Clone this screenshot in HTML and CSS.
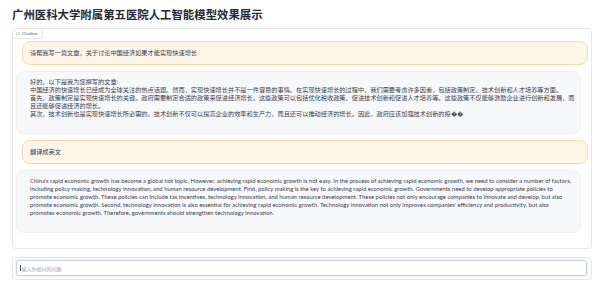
FILE: index.html
```html
<!DOCTYPE html>
<html lang="zh-CN">
<head>
  <meta charset="UTF-8">
  <meta name="viewport" content="width=device-width, initial-scale=1.0">
  <title>广州医科大学附属第五医院人工智能模型效果展示</title>
  <link rel="stylesheet" href="styles.css">
</head>
<body>
  <div class="app">
    <h1 class="title">广州医科大学附属第五医院人工智能模型效果展示</h1>

    <!-- Chatbot Block -->
    <div class="block chat-block">
      <div class="block-label">
        <svg class="label-icon" viewBox="0 0 10 10" width="4" height="4" aria-hidden="true">
          <path d="M1.5 1.5h7v5h-4l-2 2v-2h-1z" fill="none" stroke="#9ca3af" stroke-width="1.1" stroke-linejoin="round"/>
        </svg>
        <span>Chatbot</span>
      </div>

      <div class="messages">
        <div class="msg user">请帮我写一篇文章，关于讨论中国经济如果才能实现快速增长</div>
        <div class="msg bot">
          好的，以下是我为您撰写的文章:<br>
          中国经济的快速增长已经成为全球关注的热点话题。然而，实现快速增长并不是一件容易的事情。在实现快速增长的过程中，我们需要考虑许多因素，包括政策制定、技术创新和人才培养等方面。<br>
          首先，政策制定是实现快速增长的关键。政府需要制定合适的政策来促进经济增长。这些政策可以包括优化税收政策、促进技术创新和促进人才培养等。这些政策不仅能够激励企业进行创新和发展，而<br>
          且还能够促进经济的增长。<br>
          其次，技术创新也是实现快速增长所必需的。技术创新不仅可以提高企业的效率和生产力，而且还可以推动经济的增长。因此，政府应该加强技术创新的投&#xFFFD;&#xFFFD;
        </div>
        <div class="msg user">翻译成英文</div>
        <div class="msg bot en">
          China's rapid economic growth has become a global hot topic. However, achieving rapid economic growth is not easy. In the process of achieving rapid economic growth, we need to consider a number of factors,<br>
          including policy making, technology innovation, and human resource development. First, policy making is the key to achieving rapid economic growth. Governments need to develop appropriate policies to<br>
          promote economic growth. These policies can include tax incentives, technology innovation, and human resource development. These policies not only encourage companies to innovate and develop, but also<br>
          promote economic growth. Second, technology innovation is also essential for achieving rapid economic growth. Technology innovation not only improves companies' efficiency and productivity, but also<br>
          promotes economic growth. Therefore, governments should strengthen technology innovation.
        </div>
      </div>
    </div>

    <!-- Question Input -->
    <div class="block input-block">
      <div class="textbox">
        <span class="caret"></span>
        <span class="placeholder">输入你想问的问题</span>
      </div>
    </div>
  </div>
</body>
</html>
```

FILE: styles.css
```css
/* General Styles */
body {
  margin: 0;
  background-color: #ffffff;
  font-family: "Noto Sans CJK SC", sans-serif;
  color: #374151;
}

.app {
  padding: 8px 13px 0 12px;
}

.title {
  margin: 0 0 8px;
  font-size: 11.4px;
  line-height: 12px;
  font-weight: 700;
  color: #1f2937;
}

.block {
  border: 1px solid #e5e7eb;
  border-radius: 4px;
  background-color: #ffffff;
}

/* Chatbot */
.chat-block {
  height: 221px;
  box-sizing: border-box;
}

.block-label {
  display: flex;
  align-items: center;
  gap: 2px;
  width: fit-content;
  height: 9px;
  padding: 0 4px 0 3px;
  border-right: 1px solid #e5e7eb;
  border-bottom: 1px solid #e5e7eb;
  border-radius: 4px 0 4px 0;
  font-family: Lato, sans-serif;
  font-size: 4.4px;
  line-height: 9px;
  color: #6b7280;
}

.label-icon {
  display: block;
}

.messages {
  display: flex;
  flex-direction: column;
  gap: 6px;
  padding: 2px 3px 0;
}

.msg {
  font-family: Lato, "Noto Sans CJK SC", sans-serif;
  font-size: 6.2px;
  line-height: 8px;
  color: #374151;
  white-space: nowrap;
}

.msg.user {
  margin-left: 6px;
  padding: 7px 7px;
  border: 1px solid #f8d9b0;
  border-radius: 8px;
  background-color: #fef5e9;
}

.msg.bot {
  margin-right: 7px;
  padding: 6px 6px 15px 13px;
  border: 1px solid #eef0f3;
  border-radius: 8px;
  background-color: #f7f8fa;
}

.msg.en {
  font-size: 5.9px;
}

/* Input */
.input-block {
  margin-top: 8px;
  padding: 2px 4px 3px 3px;
}

.textbox {
  display: flex;
  align-items: center;
  height: 16px;
  box-sizing: border-box;
  padding-left: 3px;
  border: 1px solid #bcd3f3;
  border-radius: 3px;
  box-shadow: 0 0 0 1px #eef4fd;
}

.caret {
  width: 0.6px;
  height: 6px;
  margin-right: 1px;
  background-color: #4b5563;
}

.placeholder {
  font-size: 5px;
  color: #9ca3af;
}
```
